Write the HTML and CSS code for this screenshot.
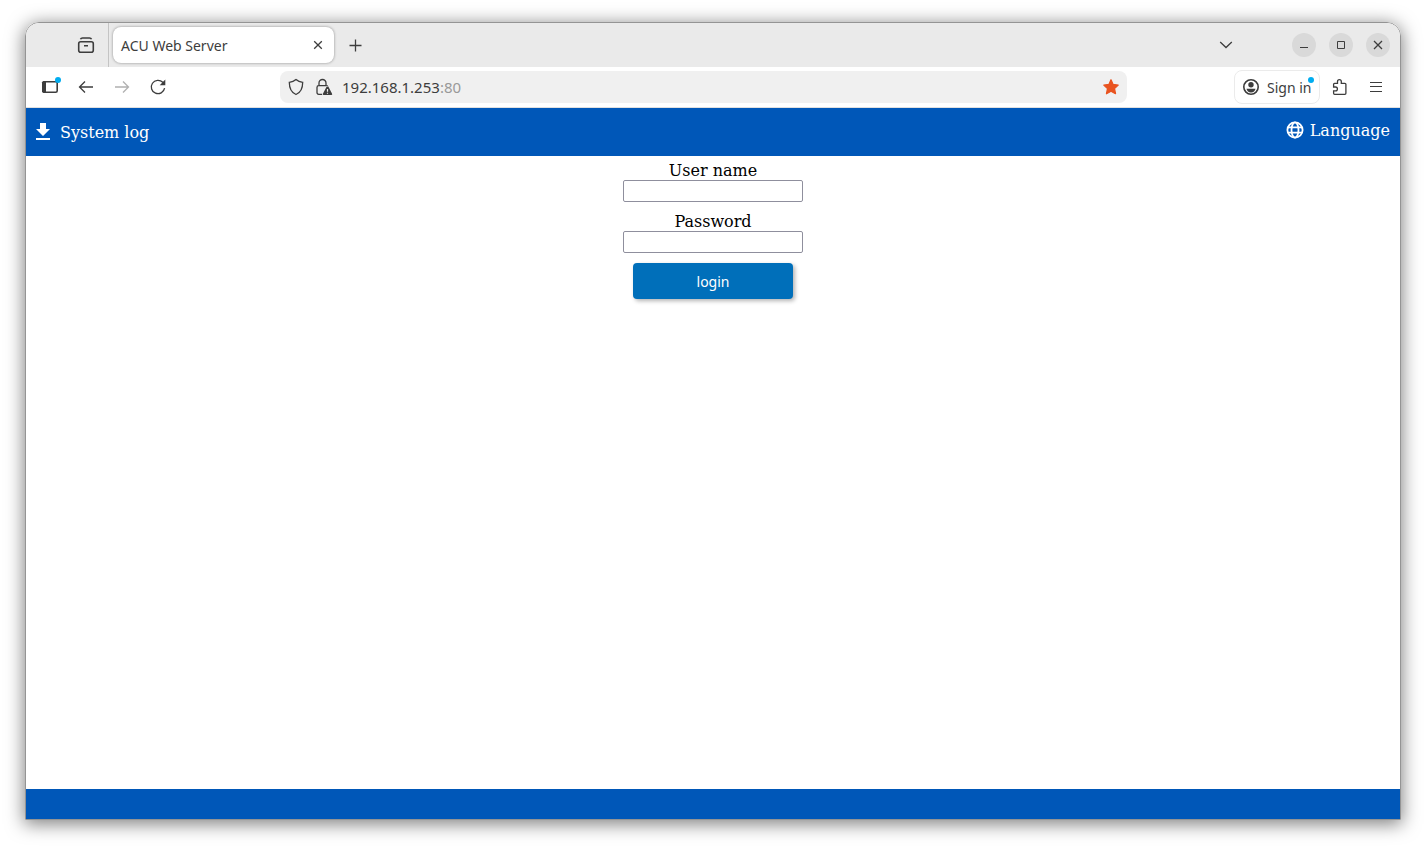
FILE: index.html
```html
<!DOCTYPE html>
<html lang="en">
<head>
<meta charset="utf-8">
<meta name="viewport" content="width=device-width, initial-scale=1">
<title>ACU Web Server</title>
<link rel="stylesheet" href="styles.css">
</head>
<body>
<div class="window">
  <div class="tabbar">
    <button class="icon-btn view-btn" aria-label="View tabs">
      <svg width="20" height="20" viewBox="0 0 20 20"><rect class="thick" x="2.700" y="6.700" width="14.600" height="10.600" rx="2"/><path class="thick" d="M4.500 4.300Q5 3 6.500 3h7Q15 3 15.500 4.300M8 10.700h4"/></svg>
    </button>
    <div class="tab">
      <span class="tab-title">ACU Web Server</span>
      <button class="tab-close" aria-label="Close tab">
        <svg width="16" height="16" viewBox="0 0 16 16"><path d="M4.200 4.200l7.600 7.600M11.800 4.200l-7.600 7.600"/></svg>
      </button>
    </div>
    <button class="icon-btn new-tab" aria-label="New tab">
      <svg width="20" height="20" viewBox="0 0 20 20"><path d="M9.500 4.500v12M3.500 10.500h12"/></svg>
    </button>
    <button class="icon-btn list-tabs" aria-label="List all tabs">
      <svg width="20" height="20" viewBox="0 0 20 20"><path d="M4.200 7l5.800 5.500L15.800 7"/></svg>
    </button>
    <div class="controls">
      <button class="control" aria-label="Minimize"><svg width="24" height="24" viewBox="0 0 24 24"><path class="thin" d="M8 14.500h8"/></svg></button>
      <button class="control" aria-label="Maximize"><svg width="24" height="24" viewBox="0 0 24 24"><path class="thin" d="M8.500 8.500h7v7h-7z"/></svg></button>
      <button class="control" aria-label="Close"><svg width="24" height="24" viewBox="0 0 24 24"><path d="M8 8l8 8M16 8l-8 8"/></svg></button>
    </div>
  </div>

  <div class="toolbar">
    <button class="icon-btn" aria-label="Sidebar">
      <svg width="24" height="24" viewBox="0 0 24 24"><rect class="thick" x="4.800" y="6.800" width="14.400" height="10.400" rx="1.500"/><path class="solid" d="M5.500 6H8v12H5.500L4 16.500v-9z"/><circle class="dot" cx="20" cy="5" r="3"/></svg>
    </button>
    <button class="icon-btn" aria-label="Back">
      <svg width="20" height="20" viewBox="0 0 20 20"><path d="M17 10H3.500M9 4.500L3.500 10 9 15.500"/></svg>
    </button>
    <button class="icon-btn" aria-label="Forward" disabled>
      <svg width="20" height="20" viewBox="0 0 20 20"><path d="M3 10h13.500M11 4.500l5.500 5.500-5.500 5.500"/></svg>
    </button>
    <button class="icon-btn" aria-label="Reload">
      <svg width="20" height="20" viewBox="0 0 20 20"><path d="M16.600 11.200A6.700 6.700 0 1 1 14.800 5.300L16.500 7"/><path class="solid" d="M17.300 2.600v5.600h-5.600z"/></svg>
    </button>
    <div class="urlbar">
      <svg width="20" height="20" viewBox="0 0 20 20"><path d="M10 2.500C8 4.200 5.500 5 3.300 5.300c0 6 1.700 10.200 6.700 12.200 5-2 6.700-6.200 6.700-12.200C14.500 5 12 4.200 10 2.500z"/></svg>
      <svg class="lock" width="20" height="20" viewBox="0 0 20 20"><path d="M8.200 17.300H4.700Q3 17.300 3 15.600V10.500Q3 8.700 4.700 8.700h7.600q1.200 0 1.700 1M5 8.500V6a3.500 3.500 0 0 1 7 0v2.500"/><path class="halo" d="M13.500 9.500q.8 0 1.200.8l3.400 6.400q.6 1.300-.9 1.300H9.800q-1.500 0-.9-1.300l3.400-6.400q.4-.8 1.200-.8z"/><path class="mark" d="M13.500 12v2.800M13.500 15.700v1.100"/></svg>
      <span class="address">192.168.1.253<span class="port">:80</span></span>
      <svg class="star" width="20" height="20" viewBox="0 0 20 20"><path d="M10 2.800l2.100 4.700 5.100.6-3.700 3.500 1 5.100L10 14.200l-4.500 2.500 1-5.100-3.700-3.500 5.100-.6z"/></svg>
    </div>
    <button class="signin">
      <svg width="20" height="20" viewBox="0 0 20 20"><circle class="thick" cx="10" cy="10" r="7.200"/><circle class="solid" cx="10" cy="7.800" r="2.700"/><path class="solid" d="M5.500 11.800h9q-.7 3.700-4.500 3.700t-4.500-3.700z"/></svg>
      <span>Sign in</span>
      <i class="badge"></i>
    </button>
    <button class="icon-btn" aria-label="Extensions">
      <svg width="20" height="20" viewBox="0 0 20 20"><path d="M3.600 9.500V7.300q0-1 1-1H7.500V4.500a1.900 1.900 0 0 1 3.800 0v1.800h3.600q1 0 1 1v9q0 1-1 1H4.600q-1 0-1-1v-2.500h1.900a1.900 1.900 0 0 0 0-3.800H3.600z"/></svg>
    </button>
    <button class="icon-btn" aria-label="Menu">
      <svg width="20" height="20" viewBox="0 0 20 20"><path class="thin" d="M4 5.500h12M4 9.500h12M4 14.500h12"/></svg>
    </button>
  </div>

  <header class="page-header">
    <a class="header-link" href="#log">
      <svg width="14" height="18" viewBox="0 0 14 18"><path d="M4 0h6v6h4l-7 7-7-7h4zM0 15h14v2H0z"/></svg>
      <span>System log</span>
    </a>
    <a class="header-link language" href="#language">
      <svg class="globe" width="18" height="18" viewBox="0 0 18 18"><circle cx="9" cy="9" r="7.600"/><ellipse cx="9" cy="9" rx="3.500" ry="7.600"/><path d="M1.900 6.300h14.200M1.900 11.700h14.200"/></svg>
      <span>Language</span>
    </a>
  </header>
  <main class="page-main">
    <form class="login">
      <label for="user">User name</label>
      <input id="user" type="text">
      <label for="pass">Password</label>
      <input id="pass" type="password">
      <button class="submit" type="button">login</button>
    </form>
  </main>
  <footer class="page-footer"></footer>
</div>
</body>
</html>
```
FILE: styles.css
```css
* { box-sizing: border-box; }
body {
  margin: 0;
  min-height: 100vh;
  padding: 22px 25px 28px;
  display: flex;
  background: #fff;
  font-family: "Noto Sans", sans-serif;
}
button { font: inherit; color: inherit; border: 0; padding: 0; background: none; }
svg { display: block; flex: none; fill: none; stroke: #3d3d3d; stroke-width: 1.3; }
.solid { fill: #3d3d3d; stroke: none; }
.thick { stroke-width: 1.6; }
.thin { stroke-width: 1; }
.window {
  flex: 1;
  min-width: 0;
  display: flex;
  flex-direction: column;
  border: 1px solid #949494;
  border-radius: 14px 14px 0 0;
  overflow: hidden;
  box-shadow: 0 3px 18px 1px rgba(0, 0, 0, .5);
  color: #3d3d3d;
  font-size: 14px;
}
.tabbar { height: 44px; display: flex; align-items: center; background: #eaeaea; }
.icon-btn { width: 36px; height: 36px; display: flex; align-items: center; justify-content: center; flex: none; }
.icon-btn:disabled { opacity: .4; }
.view-btn { width: 83px; height: 44px; justify-content: flex-end; padding-right: 12px; border-right: 1px solid #c4c4c4; }
.tab {
  width: 221px;
  height: 36px;
  margin-left: 4px;
  padding: 0 8px;
  display: flex;
  align-items: center;
  justify-content: space-between;
  background: #fff;
  border-radius: 8px;
  box-shadow: 0 0 3px rgba(0, 0, 0, .4);
}
.new-tab { margin-left: 4px; }
.list-tabs { margin-left: auto; }
.controls { display: flex; gap: 13px; margin: 0 10px 0 48px; }
.control { width: 24px; height: 24px; border-radius: 50%; background: #d9d9d9; }
.toolbar { height: 41px; display: flex; align-items: center; padding: 0 6px; border-bottom: 1px solid #e0e0e0; background: #fff; }
.dot { fill: #00adf0; stroke: none; }
.urlbar {
  flex: 1;
  min-width: 0;
  height: 32px;
  margin: 0 107px 0 104px;
  padding: 0 6px;
  display: flex;
  align-items: center;
  background: #f0f0f0;
  border-radius: 8px;
}
.lock { margin-left: 8px; }
.halo { fill: #3d3d3d; stroke: #f0f0f0; stroke-width: 1; paint-order: stroke; }
.mark { stroke: #f0f0f0; stroke-width: 1.2; }
.address { margin-left: 8px; font-size: 15px; }
.port { color: #999; }
.star { margin-left: auto; fill: #e95420; stroke: #e95420; stroke-linejoin: round; }
.signin {
  position: relative;
  height: 34px;
  width: 86px;
  margin-right: 2px;
  padding-left: 6px;
  display: flex;
  align-items: center;
  gap: 6px;
  border: 1px solid #ebebeb;
  border-radius: 8px;
  white-space: nowrap;
}
.badge { position: absolute; top: 6px; right: 5px; width: 6px; height: 6px; border-radius: 50%; background: #00adf0; }
.page-header {
  height: 48px;
  padding: 0 10px;
  display: flex;
  align-items: center;
  justify-content: space-between;
  background: #0057b8;
  font-family: "DejaVu Serif", serif;
  font-size: 16px;
}
.header-link { display: flex; align-items: center; gap: 10px; color: #fff; text-decoration: none; }
.header-link svg { fill: #fff; stroke: none; }
.language { gap: 6px; padding-bottom: 4px; }
.language .globe { fill: none; stroke: #fff; stroke-width: 1.8; }
.page-main { flex: 1; background: #fff; }
.login {
  display: flex;
  flex-direction: column;
  align-items: center;
  padding-top: 5px;
  color: #000;
  font-family: "DejaVu Serif", serif;
  font-size: 16px;
  line-height: 19px;
}
.login input { width: 180px; height: 22px; margin-bottom: 10px; border: 1px solid #8f8f9d; border-radius: 2px; background: #fff; }
.submit {
  width: 160px;
  height: 36px;
  border-radius: 4px;
  background: #006fba;
  color: #fff;
  font-family: "Noto Sans", sans-serif;
  font-size: 14px;
  box-shadow: 2px 2px 4px rgba(0, 0, 0, .3);
}
.page-footer { height: 30px; background: #0057b8; }
```
